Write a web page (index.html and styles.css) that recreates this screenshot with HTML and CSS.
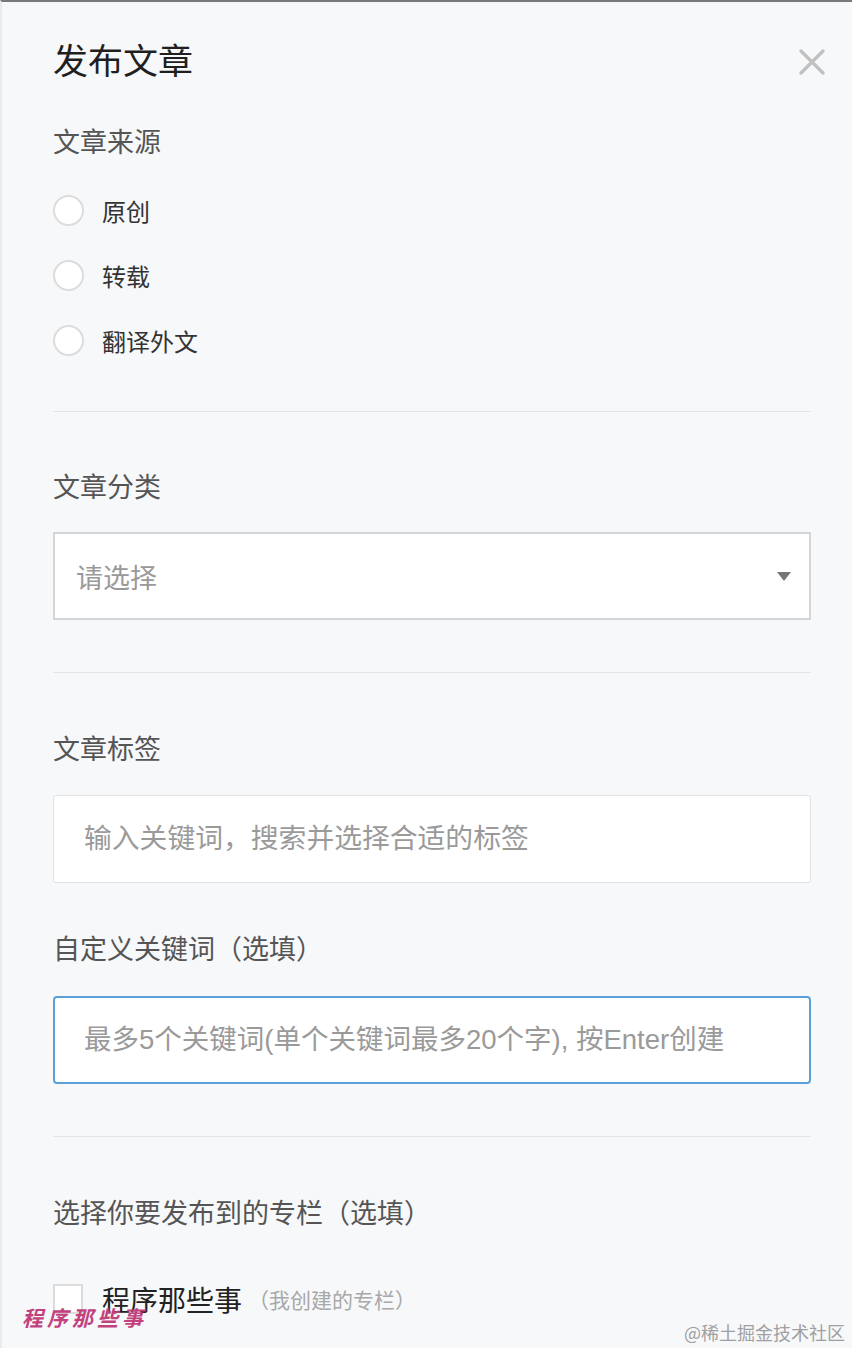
FILE: index.html
```html
<!DOCTYPE html>
<html lang="zh-CN">
<head>
<meta charset="utf-8">
<title>发布文章</title>
<link rel="stylesheet" href="styles.css">
</head>
<body>
<div class="page">
  <div class="header">
    <h1 class="title">发布文章</h1>
    <svg class="close" width="26" height="26" viewBox="0 0 26 26"><path d="M2 2 L24 24 M24 2 L2 24" stroke="#c0c0c0" stroke-width="3.2" stroke-linecap="round"/></svg>
  </div>

  <div class="label first">文章来源</div>
  <div class="radios">
    <div class="radio-row"><span class="radio"></span><span class="radio-text">原创</span></div>
    <div class="radio-row"><span class="radio"></span><span class="radio-text">转载</span></div>
    <div class="radio-row"><span class="radio"></span><span class="radio-text">翻译外文</span></div>
  </div>

  <div class="divider d1"></div>

  <div class="label l2">文章分类</div>
  <div class="select">
    <span class="select-text">请选择</span>
    <span class="caret"></span>
  </div>

  <div class="divider d2"></div>

  <div class="label l3">文章标签</div>
  <input class="field" type="text" placeholder="输入关键词，搜索并选择合适的标签">

  <div class="label l4">自定义关键词（选填）</div>
  <input class="field focused" type="text" placeholder="最多5个关键词(单个关键词最多20个字), 按Enter创建">

  <div class="divider d3"></div>

  <div class="label l5">选择你要发布到的专栏（选填）</div>
  <div class="check-row">
    <span class="checkbox"></span>
    <span class="check-text">程序那些事</span>
    <span class="check-sub">（我创建的专栏）</span>
  </div>

  <div class="watermark">程序那些事</div>
  <div class="credit">@稀土掘金技术社区</div>
</div>
</body>
</html>
```

FILE: styles.css
```css
html, body {
  margin: 0;
  padding: 0;
  background: #f7f8fa;
}
body {
  font-family: "Liberation Sans", "Noto Sans CJK SC", sans-serif;
}
.page {
  position: relative;
  box-sizing: border-box;
  width: 852px;
  height: 1348px;
  border-top: 2px solid #777a7c;
  border-left: 2px solid #e9eaec;
  padding: 40px 41px 0 51px;
  overflow: hidden;
}
.header {
  display: flex;
  align-items: center;
  justify-content: space-between;
  height: 40px;
}
.title {
  margin: 0;
  font-size: 35px;
  font-weight: 400;
  line-height: 40px;
  color: #1f1f1f;
}
.close {
  margin-right: -14px;
}
.label {
  font-size: 27px;
  line-height: 36px;
  color: #555;
}
.label.first { margin-top: 43px; }
.radios {
  display: flex;
  flex-direction: column;
  gap: 25px;
  margin-top: 29px;
}
.radio-row {
  display: flex;
  align-items: center;
  height: 40px;
}
.radio {
  box-sizing: border-box;
  width: 31px;
  height: 31px;
  border: 2px solid #dcdcdc;
  border-radius: 50%;
  background: #fff;
}
.radio-text {
  margin-left: 18px;
  font-size: 24px;
  color: #333;
}
.divider {
  height: 1px;
  background: #e3e4e6;
}
.d1 { margin-top: 51px; }
.d2 { margin-top: 52px; }
.d3 { margin-top: 52px; }
.l2 { margin-top: 58px; }
.l3 { margin-top: 59px; }
.l4 { margin-top: 49px; }
.l5 { margin-top: 59px; }
.select {
  box-sizing: border-box;
  display: flex;
  align-items: center;
  justify-content: space-between;
  height: 88px;
  margin-top: 26px;
  padding: 0 18px 0 21px;
  background: #fff;
  border: 2px solid #d4d5d7;
}
.select-text {
  font-size: 27px;
  color: #999;
}
.caret {
  width: 0;
  height: 0;
  border-left: 7px solid transparent;
  border-right: 7px solid transparent;
  border-top: 9px solid #777;
}
.field {
  display: block;
  box-sizing: border-box;
  width: 100%;
  height: 88px;
  margin: 27px 0 0;
  padding: 0 30px;
  background: #fff;
  border: 1px solid #e0e1e3;
  border-radius: 3px;
  font-family: "Liberation Sans", "Noto Sans CJK SC", sans-serif;
  font-size: 27.8px;
  color: #333;
  outline: none;
}
.field::placeholder {
  color: #9a9a9a;
}
.field.focused {
  margin-top: 28px;
  border: 2px solid #5aa1dc;
  border-radius: 4px;
  padding-left: 29px;
  font-size: 27.5px;
}
.check-row {
  display: flex;
  align-items: center;
  height: 40px;
  margin-top: 47px;
}
.checkbox {
  box-sizing: border-box;
  width: 30px;
  height: 30px;
  border: 2px solid #dcdcdc;
  background: #fff;
}
.check-text {
  margin-left: 19px;
  font-size: 28px;
  color: #222;
}
.check-sub {
  margin-left: 6px;
  font-size: 21px;
  color: #a8a8a8;
}
.watermark {
  position: absolute;
  left: 20px;
  top: 1300px;
  font-family: "Noto Sans CJK SC", serif;
  font-size: 21px;
  font-weight: 700;
  font-style: italic;
  letter-spacing: 4px;
  color: #c2427e;
}
.credit {
  position: absolute;
  right: 7px;
  top: 1318px;
  font-family: "Noto Sans CJK SC", sans-serif;
  font-size: 18px;
  line-height: 24px;
  color: #a0a0a0;
}
```
